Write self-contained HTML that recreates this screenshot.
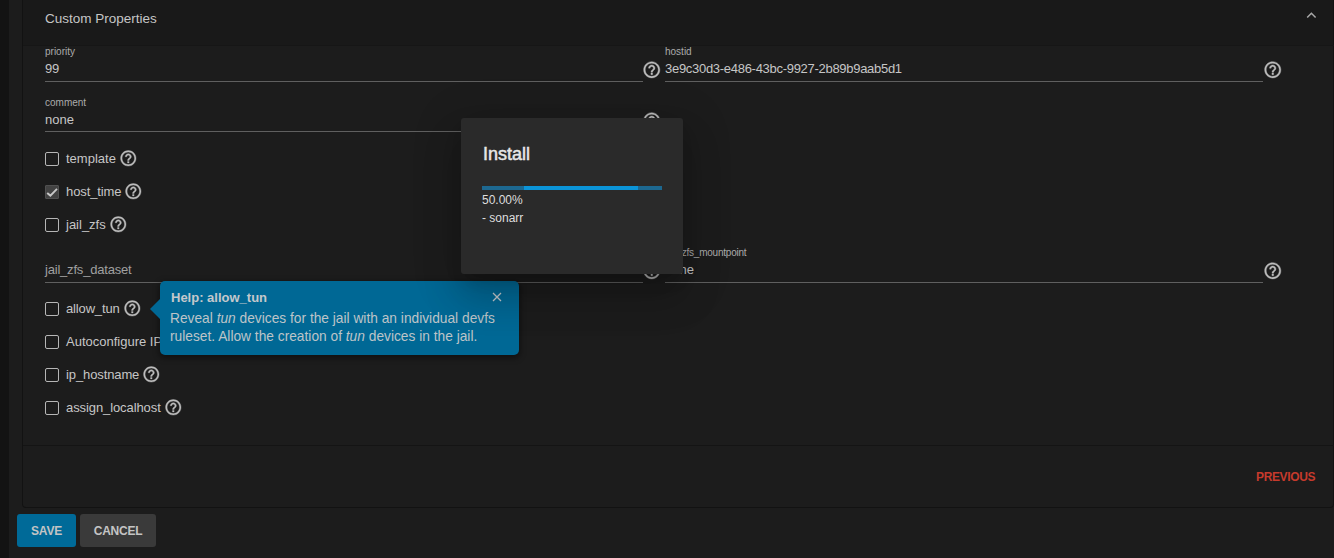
<!DOCTYPE html>
<html><head><meta charset="utf-8">
<style>
*{box-sizing:border-box;margin:0;padding:0}
html,body{width:1334px;height:558px;overflow:hidden;background:#1c1c1c;font-family:"Liberation Sans",sans-serif;color:#c6c6c6}
.abs{position:absolute}
.t13{font-size:13px;line-height:15px;white-space:nowrap;color:#c6c6c6}
.lbl{font-size:10px;line-height:12px;color:#ababab;white-space:nowrap}
.ul{height:1px;background:#5f5f5f}
.help{width:19.5px;height:19.5px;display:block}
.help path{fill:#bdbdbd;stroke:#bdbdbd;stroke-width:0.45}
.row{display:flex;align-items:center;height:19px}
.cb{display:block;width:14px;height:14px;border:1.6px solid #b6b6b6;border-radius:2px;margin-right:7px;position:relative}
.cb.chk{border:1px solid #505050;background:#424242;border-radius:1px}
.cb.chk svg{position:absolute;left:-1px;top:-1px}
.row .help{width:18.6px;height:18.6px}
.cbl{font-size:13px;line-height:15px;white-space:nowrap;color:#c6c6c6;margin-right:3px}
</style></head><body>
<div class="abs" style="left:0;top:0;width:9px;height:558px;background:#131313"></div>
<div class="abs" style="left:22px;top:-10px;width:1312px;height:518px;background:#121212;border-radius:0 0 4px 4px"></div>
<div class="abs" style="left:23px;top:-10px;width:1310px;height:517px;background:#1c1c1c;border-radius:0 0 3px 3px"></div>
<div class="abs" style="left:23px;top:0;width:1310px;height:45px;background:#191919"></div>
<div class="abs" style="left:23px;top:45px;width:1311px;height:1px;background:#161616"></div>
<div class="abs t13" style="left:45px;top:11px;font-size:13.5px;color:#c6c6c6">Custom Properties</div>
<svg class="abs" style="left:1304px;top:10px" width="16" height="10" viewBox="0 0 16 10"><path d="M3.2 7.6 L7.4 3.3 L11.6 7.6" fill="none" stroke="#a8a8a8" stroke-width="1.5"/></svg>
<div class="abs lbl" style="left:45px;top:46px">priority</div>
<div class="abs t13" style="left:45px;top:61px;letter-spacing:-0.2px">99</div>
<div class="abs ul" style="left:45px;top:81px;width:598px"></div>
<div class="abs" style="left:642px;top:60px"><svg class="help" viewBox="0 0 24 24"><path d="M11 18h2v-2h-2v2zm1-16C6.48 2 2 6.48 2 12s4.48 10 10 10 10-4.48 10-10S17.52 2 12 2zm0 18c-4.41 0-8-3.59-8-8s3.59-8 8-8 8 3.59 8 8-3.59 8-8 8zm0-14c-2.21 0-4 1.79-4 4h2c0-1.1.9-2 2-2s2 .9 2 2c0 2-3 1.75-3 5h2c0-2.25 3-2.5 3-5 0-2.21-1.79-4-4-4z"/></svg></div>
<div class="abs lbl" style="left:665px;top:46px">hostid</div>
<div class="abs t13" style="left:665px;top:61px;letter-spacing:-0.29px">3e9c30d3-e486-43bc-9927-2b89b9aab5d1</div>
<div class="abs ul" style="left:665px;top:81px;width:598px"></div>
<div class="abs" style="left:1263px;top:60px"><svg class="help" viewBox="0 0 24 24"><path d="M11 18h2v-2h-2v2zm1-16C6.48 2 2 6.48 2 12s4.48 10 10 10 10-4.48 10-10S17.52 2 12 2zm0 18c-4.41 0-8-3.59-8-8s3.59-8 8-8 8 3.59 8 8-3.59 8-8 8zm0-14c-2.21 0-4 1.79-4 4h2c0-1.1.9-2 2-2s2 .9 2 2c0 2-3 1.75-3 5h2c0-2.25 3-2.5 3-5 0-2.21-1.79-4-4-4z"/></svg></div>
<div class="abs lbl" style="left:45px;top:97px">comment</div>
<div class="abs t13" style="left:45px;top:112px">none</div>
<div class="abs ul" style="left:45px;top:131px;width:598px"></div>
<div class="abs" style="left:642px;top:111px"><svg class="help" viewBox="0 0 24 24"><path d="M11 18h2v-2h-2v2zm1-16C6.48 2 2 6.48 2 12s4.48 10 10 10 10-4.48 10-10S17.52 2 12 2zm0 18c-4.41 0-8-3.59-8-8s3.59-8 8-8 8 3.59 8 8-3.59 8-8 8zm0-14c-2.21 0-4 1.79-4 4h2c0-1.1.9-2 2-2s2 .9 2 2c0 2-3 1.75-3 5h2c0-2.25 3-2.5 3-5 0-2.21-1.79-4-4-4z"/></svg></div>
<div class="abs row" style="left:45px;top:149px"><span class="cb"></span><span class="cbl">template</span><svg class="help" viewBox="0 0 24 24"><path d="M11 18h2v-2h-2v2zm1-16C6.48 2 2 6.48 2 12s4.48 10 10 10 10-4.48 10-10S17.52 2 12 2zm0 18c-4.41 0-8-3.59-8-8s3.59-8 8-8 8 3.59 8 8-3.59 8-8 8zm0-14c-2.21 0-4 1.79-4 4h2c0-1.1.9-2 2-2s2 .9 2 2c0 2-3 1.75-3 5h2c0-2.25 3-2.5 3-5 0-2.21-1.79-4-4-4z"/></svg></div>
<div class="abs row" style="left:45px;top:182px"><span class="cb chk"><svg width="14" height="14" viewBox="0 0 14 14"><path d="M2.2 7.9 L5.4 10.6 L12 3.9" fill="none" stroke="#c8c8c8" stroke-width="1.9"/></svg></span><span class="cbl"><span style="letter-spacing:-0.1px">host_time</span></span><svg class="help" viewBox="0 0 24 24"><path d="M11 18h2v-2h-2v2zm1-16C6.48 2 2 6.48 2 12s4.48 10 10 10 10-4.48 10-10S17.52 2 12 2zm0 18c-4.41 0-8-3.59-8-8s3.59-8 8-8 8 3.59 8 8-3.59 8-8 8zm0-14c-2.21 0-4 1.79-4 4h2c0-1.1.9-2 2-2s2 .9 2 2c0 2-3 1.75-3 5h2c0-2.25 3-2.5 3-5 0-2.21-1.79-4-4-4z"/></svg></div>
<div class="abs row" style="left:45px;top:215px"><span class="cb"></span><span class="cbl">jail_zfs</span><svg class="help" viewBox="0 0 24 24"><path d="M11 18h2v-2h-2v2zm1-16C6.48 2 2 6.48 2 12s4.48 10 10 10 10-4.48 10-10S17.52 2 12 2zm0 18c-4.41 0-8-3.59-8-8s3.59-8 8-8 8 3.59 8 8-3.59 8-8 8zm0-14c-2.21 0-4 1.79-4 4h2c0-1.1.9-2 2-2s2 .9 2 2c0 2-3 1.75-3 5h2c0-2.25 3-2.5 3-5 0-2.21-1.79-4-4-4z"/></svg></div>
<div class="abs t13" style="left:45px;top:262px;color:#a0a0a0;letter-spacing:-0.2px">jail_zfs_dataset</div>
<div class="abs ul" style="left:45px;top:282px;width:598px"></div>
<div class="abs" style="left:642px;top:261px"><svg class="help" viewBox="0 0 24 24"><path d="M11 18h2v-2h-2v2zm1-16C6.48 2 2 6.48 2 12s4.48 10 10 10 10-4.48 10-10S17.52 2 12 2zm0 18c-4.41 0-8-3.59-8-8s3.59-8 8-8 8 3.59 8 8-3.59 8-8 8zm0-14c-2.21 0-4 1.79-4 4h2c0-1.1.9-2 2-2s2 .9 2 2c0 2-3 1.75-3 5h2c0-2.25 3-2.5 3-5 0-2.21-1.79-4-4-4z"/></svg></div>
<div class="abs lbl" style="left:665px;top:247px;letter-spacing:-0.22px">jail_zfs_mountpoint</div>
<div class="abs t13" style="left:665px;top:262px">none</div>
<div class="abs ul" style="left:665px;top:282px;width:598px"></div>
<div class="abs" style="left:1263px;top:261px"><svg class="help" viewBox="0 0 24 24"><path d="M11 18h2v-2h-2v2zm1-16C6.48 2 2 6.48 2 12s4.48 10 10 10 10-4.48 10-10S17.52 2 12 2zm0 18c-4.41 0-8-3.59-8-8s3.59-8 8-8 8 3.59 8 8-3.59 8-8 8zm0-14c-2.21 0-4 1.79-4 4h2c0-1.1.9-2 2-2s2 .9 2 2c0 2-3 1.75-3 5h2c0-2.25 3-2.5 3-5 0-2.21-1.79-4-4-4z"/></svg></div>
<div class="abs row" style="left:45px;top:299px"><span class="cb"></span><span class="cbl"><span style="letter-spacing:-0.15px">allow_tun</span></span><svg class="help" viewBox="0 0 24 24"><path d="M11 18h2v-2h-2v2zm1-16C6.48 2 2 6.48 2 12s4.48 10 10 10 10-4.48 10-10S17.52 2 12 2zm0 18c-4.41 0-8-3.59-8-8s3.59-8 8-8 8 3.59 8 8-3.59 8-8 8zm0-14c-2.21 0-4 1.79-4 4h2c0-1.1.9-2 2-2s2 .9 2 2c0 2-3 1.75-3 5h2c0-2.25 3-2.5 3-5 0-2.21-1.79-4-4-4z"/></svg></div>
<div class="abs row" style="left:45px;top:332px"><span class="cb"></span><span class="cbl">Autoconfigure IPv6</span><svg class="help" viewBox="0 0 24 24"><path d="M11 18h2v-2h-2v2zm1-16C6.48 2 2 6.48 2 12s4.48 10 10 10 10-4.48 10-10S17.52 2 12 2zm0 18c-4.41 0-8-3.59-8-8s3.59-8 8-8 8 3.59 8 8-3.59 8-8 8zm0-14c-2.21 0-4 1.79-4 4h2c0-1.1.9-2 2-2s2 .9 2 2c0 2-3 1.75-3 5h2c0-2.25 3-2.5 3-5 0-2.21-1.79-4-4-4z"/></svg></div>
<div class="abs row" style="left:45px;top:365px"><span class="cb"></span><span class="cbl"><span style="letter-spacing:-0.11px">ip_hostname</span></span><svg class="help" viewBox="0 0 24 24"><path d="M11 18h2v-2h-2v2zm1-16C6.48 2 2 6.48 2 12s4.48 10 10 10 10-4.48 10-10S17.52 2 12 2zm0 18c-4.41 0-8-3.59-8-8s3.59-8 8-8 8 3.59 8 8-3.59 8-8 8zm0-14c-2.21 0-4 1.79-4 4h2c0-1.1.9-2 2-2s2 .9 2 2c0 2-3 1.75-3 5h2c0-2.25 3-2.5 3-5 0-2.21-1.79-4-4-4z"/></svg></div>
<div class="abs row" style="left:45px;top:398px"><span class="cb"></span><span class="cbl"><span style="letter-spacing:-0.09px">assign_localhost</span></span><svg class="help" viewBox="0 0 24 24"><path d="M11 18h2v-2h-2v2zm1-16C6.48 2 2 6.48 2 12s4.48 10 10 10 10-4.48 10-10S17.52 2 12 2zm0 18c-4.41 0-8-3.59-8-8s3.59-8 8-8 8 3.59 8 8-3.59 8-8 8zm0-14c-2.21 0-4 1.79-4 4h2c0-1.1.9-2 2-2s2 .9 2 2c0 2-3 1.75-3 5h2c0-2.25 3-2.5 3-5 0-2.21-1.79-4-4-4z"/></svg></div>
<div class="abs" style="left:23px;top:445px;width:1311px;height:1px;background:#141414"></div>
<div class="abs" style="left:1256px;top:470px;font-size:12px;line-height:14px;color:#c63a2c;font-weight:bold;letter-spacing:-0.35px">PREVIOUS</div>
<div class="abs" style="left:17px;top:514px;width:59px;height:33px;background:#006a98;border-radius:3px;color:#c4c4c4;font-size:12px;font-weight:bold;text-align:center;line-height:34px;letter-spacing:-0.15px">SAVE</div>
<div class="abs" style="left:80px;top:514px;width:76px;height:33px;background:#3a3a3a;border-radius:3px;color:#c4c4c4;font-size:12px;font-weight:bold;text-align:center;line-height:34px;letter-spacing:-0.25px">CANCEL</div>
<div class="abs" style="left:160px;top:281px;width:359px;height:74px;background:#006895;border-radius:5px;box-shadow:0 2px 6px 1px rgba(0,0,0,.45)"></div>
<div class="abs" style="left:150px;top:299px;width:0;height:0;border-top:10px solid transparent;border-bottom:10px solid transparent;border-right:10px solid #006895"></div>
<div class="abs" style="left:171px;top:290px;font-size:13px;line-height:15px;font-weight:bold;color:#c4c8cc">Help: allow_tun</div>
<svg class="abs" style="left:490px;top:290px" width="14" height="14" viewBox="0 0 14 14"><path d="M3 3 L11 11 M11 3 L3 11" stroke="#c4c8cc" stroke-width="1.3"/></svg>
<div class="abs" style="left:170px;top:310px;font-size:13.75px;line-height:18px;color:#bdc4c8;width:346px">Reveal <i>tun</i> devices for the jail with an individual devfs ruleset. Allow the creation of <i>tun</i> devices in the jail.</div>
<div class="abs" style="left:461px;top:118px;width:222px;height:156px;background:#2a2a2a;border-radius:3px;box-shadow:0 11px 15px -7px rgba(0,0,0,.2),0 24px 38px 3px rgba(0,0,0,.14),0 9px 46px 8px rgba(0,0,0,.12)"></div>
<div class="abs" style="left:483px;top:144px;font-size:18px;line-height:20px;color:#e6e6e6;-webkit-text-stroke:0.5px #e6e6e6">Install</div>
<div class="abs" style="left:482px;top:186px;width:180px;height:4px;background:#1d6890"></div>
<div class="abs" style="left:524px;top:186px;width:114px;height:4px;background:#0b94d8"></div>
<div class="abs" style="left:482px;top:193px;font-size:12px;line-height:14px;color:#dedede">50.00%</div>
<div class="abs" style="left:482px;top:211px;font-size:12px;line-height:14px;color:#dedede">- sonarr</div>
</body></html>
